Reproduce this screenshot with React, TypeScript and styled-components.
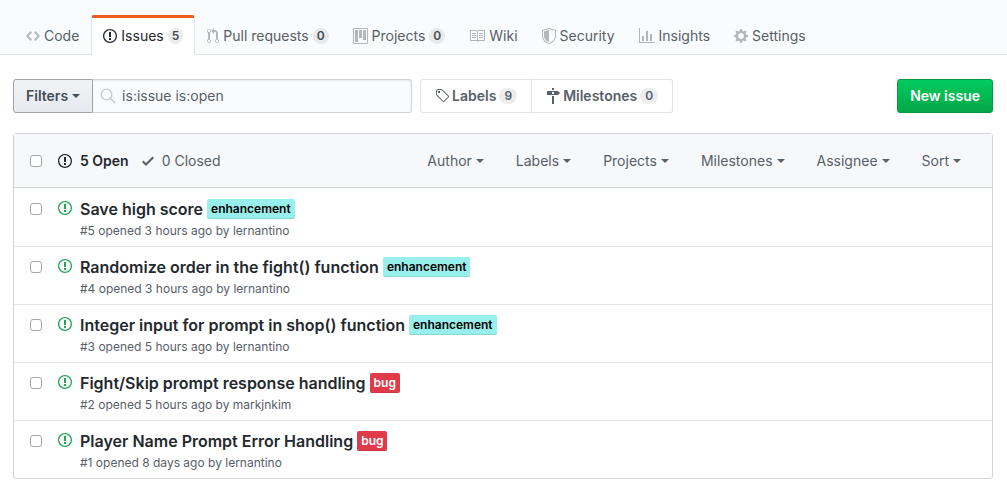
import React, { useState } from "react";
import styled, { createGlobalStyle } from "styled-components";

const GlobalStyle = createGlobalStyle`
  *, *::before, *::after { box-sizing: border-box; }
  body {
    margin: 0;
    background: #fff;
    color: #24292e;
    font: 14px/20px Inter, "Liberation Sans", sans-serif;
  }
  button, input { font: inherit; color: inherit; }
  a { color: inherit; text-decoration: none; }
`;

const icons = {
  code: { w: 14, d: "M9.5 3L8 4.5 11.5 8 8 11.5 9.5 13 14 8 9.5 3zm-5 0L0 8l4.5 5L6 11.5 2.5 8 6 4.5 4.5 3z" },
  issue: { w: 14, d: "M7 2.3c3.14 0 5.7 2.56 5.7 5.7s-2.56 5.7-5.7 5.7A5.71 5.71 0 0 1 1.3 8c0-3.14 2.56-5.7 5.7-5.7zM7 1C3.14 1 0 4.14 0 8s3.14 7 7 7 7-3.14 7-7-3.14-7-7-7zm1 3H6v5h2V4zm0 6H6v2h2v-2z" },
  pull: { w: 12, d: "M11 11.28V5c-.03-.78-.34-1.47-.94-2.06C9.46 2.35 8.78 2.03 8 2H7V0L4 3l3 3V4h1c.27.02.48.11.69.31.21.2.3.42.31.69v6.28A1.993 1.993 0 0 0 10 15a1.993 1.993 0 0 0 1-3.72zm-1 2.92c-.66 0-1.2-.55-1.2-1.2 0-.65.55-1.2 1.2-1.2.65 0 1.2.55 1.2 1.2 0 .65-.55 1.2-1.2 1.2zM4 3c0-1.11-.89-2-2-2a1.993 1.993 0 0 0-1 3.72v6.56A1.993 1.993 0 0 0 2 15a1.993 1.993 0 0 0 1-3.72V4.72c.59-.34 1-.98 1-1.72zm-.8 10c0 .66-.55 1.2-1.2 1.2-.65 0-1.2-.55-1.2-1.2 0-.65.55-1.2 1.2-1.2.65 0 1.2.55 1.2 1.2zM2 4.2C1.34 4.2.8 3.65.8 3c0-.65.55-1.2 1.2-1.2.65 0 1.2.55 1.2 1.2 0 .65-.55 1.2-1.2 1.2z" },
  project: { w: 15, d: "M10 12h3V2h-3v10zm-4-2h3V2H6v8zm-4 4h3V2H2v12zm-1 1h13V1H1v14zM14 0H1a1 1 0 0 0-1 1v14a1 1 0 0 0 1 1h13a1 1 0 0 0 1-1V1a1 1 0 0 0-1-1z" },
  book: { w: 16, d: "M3 5h4v1H3V5zm0 3h4V7H3v1zm0 2h4V9H3v1zm11-5h-4v1h4V5zm0 2h-4v1h4V7zm0 2h-4v1h4V9zm2-6v9c0 .55-.45 1-1 1H9.5l-1 1-1-1H2c-.55 0-1-.45-1-1V3c0-.55.45-1 1-1h5.5l1 1 1-1H15c.55 0 1 .45 1 1zm-8 .5L7.5 3H2v9h6V3.5zm7-.5H9.5l-.5.5V12h6V3z" },
  shield: { w: 14, d: "M0 2l7-2 7 2v6.02C14 12.69 8.69 16 7 16c-1.69 0-7-3.31-7-7.98V2zm1 .75L7 1l6 1.75v5.268C13 12.104 8.449 15 7 15c-1.449 0-6-2.896-6-6.982V2.75zm1 .75L7 2v12c-1.207 0-5-2.482-5-5.985V3.5z" },
  graph: { w: 16, d: "M16 14v1H0V0h1v14h15zM5 13H3V8h2v5zm4 0H7V3h2v10zm4 0h-2V6h2v7z" },
  gear: { w: 14, d: "M14 8.77v-1.6l-1.94-.64-.45-1.09.88-1.84-1.13-1.13-1.81.91-1.09-.45-.69-1.92h-1.6l-.63 1.94-1.11.45-1.84-.88-1.13 1.13.91 1.81-.45 1.09L0 7.23v1.59l1.94.64.45 1.09-.88 1.84 1.13 1.13 1.81-.91 1.09.45.69 1.92h1.59l.63-1.94 1.11-.45 1.84.88 1.13-1.13-.92-1.81.47-1.09L14 8.75v.02zM7 11c-1.66 0-3-1.34-3-3s1.34-3 3-3 3 1.34 3 3-1.34 3-3 3z" },
  tag: { w: 14, d: "M7.73 1.73C7.26 1.26 6.62 1 5.96 1H3.5C2.13 1 1 2.13 1 3.5v2.47c0 .66.27 1.3.73 1.77l6.06 6.06c.39.39 1.02.39 1.41 0l4.59-4.59a.996.996 0 0 0 0-1.41L7.73 1.73zM2.38 7.09c-.31-.3-.47-.7-.47-1.13V3.5c0-.88.72-1.59 1.59-1.59h2.47c.42 0 .83.16 1.13.47l6.14 6.13-4.73 4.73-6.13-6.15zM3.01 3h2v2H3V3h.01z" },
  milestone: { w: 14, d: "M8 2H6V0h2v2zm4 5H2c-.55 0-1-.45-1-1V4c0-.55.45-1 1-1h10l2 2-2 2zM8 4H6v2h2V4zM6 16h2V8H6v8z" },
  check: { w: 12, d: "M12 5l-8 8-4-4 1.5-1.5L4 10l6.5-6.5L12 5z" },
};
type IconName = keyof typeof icons;

const Svg = styled.svg`
  flex: none;
  display: block;
  fill: currentColor;
`;

const Icon = ({ name }: { name: IconName }) => (
  <Svg width={icons[name].w} height={16} viewBox={`0 0 ${icons[name].w} 16`} aria-hidden="true">
    <path fillRule="evenodd" d={icons[name].d} />
  </Svg>
);

const RepoNav = styled.nav`
  display: flex;
  height: 55px;
  padding: 15px 14px 0;
  background: #fafbfc;
  box-shadow: inset 0 -1px #e1e4e8;
`;

const Tab = styled.a<{ $selected?: boolean }>`
  display: flex;
  align-items: center;
  gap: 4px;
  padding: 0 11px 2px;
  border: 1px solid transparent;
  border-width: 3px 1px 0;
  border-radius: 3px 3px 0 0;
  white-space: nowrap;
  color: ${(p) => (p.$selected ? "#24292e" : "#586069")};
  ${(p) => p.$selected && "border-color: #eb5e23 #e1e4e8 transparent; background: #fff;"}
  svg { color: ${(p) => (p.$selected ? "#24292e" : "#b4b7ba")}; }
`;

const Counter = styled.span<{ $wide?: boolean }>`
  padding: 0 ${(p) => (p.$wide ? 5 : 4)}px;
  border-radius: 8px;
  background: rgba(27, 31, 35, 0.08);
  color: ${(p) => (p.$wide ? "#586069" : "#444d56")};
  font-size: 12px;
  font-weight: 600;
  line-height: 16px;
  text-align: center;
`;

const Main = styled.main`
  padding: 24px 14px 14px 13px;
`;

const Toolbar = styled.div`
  display: flex;
  align-items: stretch;
  height: 34px;
  margin-bottom: 20px;
`;

const Caret = styled.span`
  border: 4px solid transparent;
  border-top-color: currentColor;
  border-bottom: 0;
`;

const FiltersButton = styled.button`
  display: flex;
  align-items: center;
  gap: 4px;
  padding: 0 12px;
  border: 1px solid #9fa4a9;
  border-radius: 3px 0 0 3px;
  background: linear-gradient(#f0f3f6, #e6ebf1);
  color: #444d56;
  font-weight: 600;
`;

const SearchForm = styled.form`
  flex: 0 1 319px;
  display: flex;
  align-items: center;
  gap: 6px;
  padding: 0 8px 0 7px;
  border: 1px solid #d1d5da;
  border-left: 0;
  border-radius: 0 3px 3px 0;
  background: #fafbfc;
  box-shadow: inset 0 1px 2px rgba(27, 31, 35, 0.08);
`;

const SearchIcon = styled.svg`
  flex: none;
  fill: none;
  stroke: #c6cbd1;
`;

const SearchInput = styled.input`
  flex: 1;
  min-width: 0;
  padding: 0;
  border: 0;
  outline: 0;
  background: transparent;
  color: #586069;
`;

const Subnav = styled.div`
  display: flex;
  margin: 0 auto 0 8px;
`;

const SubnavLink = styled.a`
  display: flex;
  align-items: center;
  gap: 3px;
  padding: 0 14px;
  border: 1px solid #e1e4e8;
  color: #586069;
  font-weight: 600;
  &:first-child { border-radius: 3px 0 0 3px; }
  &:last-child { border-left: 0; border-radius: 0 3px 3px 0; }
`;

const PrimaryButton = styled.button`
  padding: 0 12px;
  border: 1px solid #08963e;
  border-radius: 3px;
  background: linear-gradient(#03cc5f, #04a647);
  color: #fff;
  font-weight: 600;
`;

const IssueBox = styled.section`
  border: 1px solid #d1d5da;
  border-radius: 3px;
`;

const BoxHeader = styled.header`
  display: flex;
  align-items: center;
  height: 54px;
  padding: 0 16px;
  border-bottom: 1px solid #d1d5da;
  background: #f6f8fa;
  color: #586069;
`;

const Checkbox = styled.input.attrs({ type: "checkbox" })`
  appearance: none;
  flex: none;
  width: 12px;
  height: 12px;
  margin: 1px 16px 0 0;
  border: 1px solid #a3a5a7;
  border-radius: 3px;
  background: #fff;
  &:checked { background: #0366d6; }
`;

const StateLink = styled.a<{ $selected?: boolean }>`
  display: flex;
  align-items: center;
  gap: 8px;
  margin-right: 13px;
  color: ${(p) => (p.$selected ? "#24292e" : "#586069")};
  font-weight: ${(p) => (p.$selected ? 600 : 400)};
`;

const FilterMenus = styled.div`
  display: flex;
  gap: 32px;
  margin-left: auto;
  padding-right: 15px;
`;

const MenuButton = styled.button`
  display: flex;
  align-items: center;
  gap: 4px;
  padding: 0;
  border: 0;
  background: none;
  color: #586069;
`;

const IssueList = styled.ul`
  margin: 0;
  padding: 1px 0 0;
  list-style: none;
`;

const IssueRow = styled.li`
  display: flex;
  align-items: flex-start;
  padding: 9px 16px 6px;
  & + & { border-top: 1px solid #e1e4e8; }
  ${Checkbox} { margin-top: 5px; }
`;

const OpenIcon = styled.span`
  margin: 2px 8px 0 0;
  color: #22a652;
`;

const TitleLine = styled.div`
  display: flex;
  align-items: flex-start;
  gap: 4px;
  height: 24px;
`;

const Title = styled.a`
  font-size: 16px;
  font-weight: 600;
  line-height: 22px;
`;

const Label = styled.a<{ $kind: "enhancement" | "bug" }>`
  margin-top: 1px;
  padding: 0 4px;
  border-radius: 2px;
  background: ${(p) => (p.$kind === "bug" ? "#e03b4b" : "#98f0ec")};
  box-shadow: inset 0 -1px rgba(27, 31, 35, 0.12);
  color: ${(p) => (p.$kind === "bug" ? "#fff" : "#000")};
  font-size: 12px;
  font-weight: 600;
`;

const Meta = styled.p`
  margin: 0;
  color: #586069;
  font-size: 12px;
  line-height: 18px;
`;

const tabs: { icon: IconName; text: string; count?: number; selected?: boolean }[] = [
  { icon: "code", text: "Code" },
  { icon: "issue", text: "Issues", count: 5, selected: true },
  { icon: "pull", text: "Pull requests", count: 0 },
  { icon: "project", text: "Projects", count: 0 },
  { icon: "book", text: "Wiki" },
  { icon: "shield", text: "Security" },
  { icon: "graph", text: "Insights" },
  { icon: "gear", text: "Settings" },
];

const menus = ["Author", "Labels", "Projects", "Milestones", "Assignee", "Sort"];

const issues: { id: number; title: string; label: "enhancement" | "bug"; when: string; by: string }[] = [
  { id: 5, title: "Save high score", label: "enhancement", when: "3 hours ago", by: "lernantino" },
  { id: 4, title: "Randomize order in the fight() function", label: "enhancement", when: "3 hours ago", by: "lernantino" },
  { id: 3, title: "Integer input for prompt in shop() function", label: "enhancement", when: "5 hours ago", by: "lernantino" },
  { id: 2, title: "Fight/Skip prompt response handling", label: "bug", when: "5 hours ago", by: "markjnkim" },
  { id: 1, title: "Player Name Prompt Error Handling", label: "bug", when: "8 days ago", by: "lernantino" },
];

export default function App() {
  const [query, setQuery] = useState("is:issue is:open");
  return (
    <>
      <GlobalStyle />
      <RepoNav aria-label="Repository">
        {tabs.map((t) => (
          <Tab key={t.text} href="#" $selected={t.selected} aria-current={t.selected ? "page" : undefined}>
            <Icon name={t.icon} />
            {t.text}
            {t.count !== undefined && <Counter>{t.count}</Counter>}
          </Tab>
        ))}
      </RepoNav>
      <Main>
        <Toolbar>
          <FiltersButton type="button">
            Filters <Caret />
          </FiltersButton>
          <SearchForm role="search" onSubmit={(e) => e.preventDefault()}>
            <SearchIcon width="16" height="16" viewBox="0 0 16 16" aria-hidden="true">
              <circle cx="6.5" cy="6.5" r="5.3" strokeWidth="1.3" />
              <path d="M10.4 10.4l4.4 4.4" strokeWidth="1.6" strokeLinecap="round" />
            </SearchIcon>
            <SearchInput
              type="text"
              aria-label="Search all issues"
              value={query}
              onChange={(e) => setQuery(e.target.value)}
            />
          </SearchForm>
          <Subnav>
            <SubnavLink href="#">
              <Icon name="tag" /> Labels <Counter $wide>9</Counter>
            </SubnavLink>
            <SubnavLink href="#">
              <Icon name="milestone" /> Milestones <Counter $wide>0</Counter>
            </SubnavLink>
          </Subnav>
          <PrimaryButton type="button">New issue</PrimaryButton>
        </Toolbar>
        <IssueBox>
          <BoxHeader>
            <Checkbox aria-label="Select all issues" />
            <StateLink href="#" $selected>
              <Icon name="issue" /> 5 Open
            </StateLink>
            <StateLink href="#">
              <Icon name="check" /> 0 Closed
            </StateLink>
            <FilterMenus>
              {menus.map((m) => (
                <MenuButton key={m} type="button">
                  {m} <Caret />
                </MenuButton>
              ))}
            </FilterMenus>
          </BoxHeader>
          <IssueList>
            {issues.map((i) => (
              <IssueRow key={i.id}>
                <Checkbox aria-label={`Select issue ${i.id}`} />
                <OpenIcon>
                  <Icon name="issue" />
                </OpenIcon>
                <div>
                  <TitleLine>
                    <Title href="#">{i.title}</Title>
                    <Label href="#" $kind={i.label}>{i.label}</Label>
                  </TitleLine>
                  <Meta>{`#${i.id} opened ${i.when} by ${i.by}`}</Meta>
                </div>
              </IssueRow>
            ))}
          </IssueList>
        </IssueBox>
      </Main>
    </>
  );
}
